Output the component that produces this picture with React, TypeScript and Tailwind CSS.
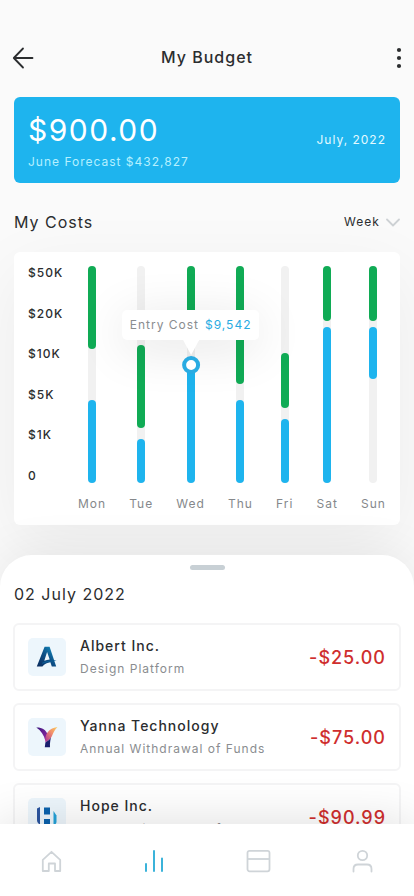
import React from "react";

type Segment = { from: number; to: number; color: "green" | "blue" };
type Day = { label: string; segments: Segment[]; entry?: { value: string; at: number } };

const PLOT_HEIGHT = 217;

const days: Day[] = [
  { label: "Mon", segments: [{ from: 0, to: 83, color: "green" }, { from: 134, to: 217, color: "blue" }] },
  { label: "Tue", segments: [{ from: 79, to: 162, color: "green" }, { from: 173, to: 217, color: "blue" }] },
  {
    label: "Wed",
    segments: [{ from: 0, to: 60, color: "green" }, { from: 95, to: 217, color: "blue" }],
    entry: { value: "$9,542", at: 99 },
  },
  { label: "Thu", segments: [{ from: 0, to: 118, color: "green" }, { from: 134, to: 217, color: "blue" }] },
  { label: "Fri", segments: [{ from: 87, to: 142, color: "green" }, { from: 153, to: 217, color: "blue" }] },
  { label: "Sat", segments: [{ from: 0, to: 55, color: "green" }, { from: 61, to: 217, color: "blue" }] },
  { label: "Sun", segments: [{ from: 0, to: 55, color: "green" }, { from: 61, to: 113, color: "blue" }] },
];

const scale = ["$50K", "$20K", "$10K", "$5K", "$1K", "0"];

function AlbertLogo() {
  return (
    <svg width="22" height="22" viewBox="0 0 22 22" aria-hidden="true">
      <defs>
        <linearGradient id="albert" x1="0" y1="1" x2="1" y2="0">
          <stop offset="0" stopColor="#0b2a5c" />
          <stop offset="0.5" stopColor="#0c4f86" />
          <stop offset="1" stopColor="#1596c8" />
        </linearGradient>
      </defs>
      <path
        d="M8.600 .8h5L20.200 20.500h-4.400l-1.400-4.300c-3 .3-5.800 1.500-8 4.300H.8Zm2.500 5.200L8.300 14.800c1.700-.8 3.500-1.200 5.400-1.300Z"
        fill="url(#albert)"
      />
      <path d="M6.500 16.500c4-2.200 8.500-1.800 14-2.500-4 2.300-9.500 1.700-14.500 4Z" fill="#0d5a93" />
    </svg>
  );
}

function YannaLogo() {
  return (
    <svg width="22" height="22" viewBox="0 0 22 22" aria-hidden="true">
      <defs>
        <linearGradient id="yannaLeft" x1="0" y1="0" x2="1" y2="1">
          <stop offset="0" stopColor="#3a1680" />
          <stop offset="1" stopColor="#9a2aa5" />
        </linearGradient>
        <linearGradient id="yannaRight" x1="1" y1="0" x2="0" y2="1">
          <stop offset="0" stopColor="#fdd05a" />
          <stop offset="0.45" stopColor="#f08a6c" />
          <stop offset="1" stopColor="#a62d9a" />
        </linearGradient>
      </defs>
      <path d="M.3 1.500c5-.3 9.700 2 11.700 7.500l-2.600 6C8 9 5 4.500.3 1.500Z" fill="url(#yannaLeft)" />
      <path d="M21.500 1c-2.800 2.500-4 5.500-5.500 9-1.400 3-3.500 4.600-6.600 6.500C8.500 8.500 12.500 2 21.500 1Z" fill="url(#yannaRight)" />
      <path d="M9.400 16.500c2.500-1.500 4.300-3 5.600-5-.8 3.200-1.200 6-1 9.700H8.800Z" fill="#1a1e6e" />
    </svg>
  );
}

function HopeLogo() {
  return (
    <svg width="22" height="22" viewBox="0 0 22 22" aria-hidden="true">
      <path d="M1 2.500 4 1v17.500c-2-1-3-2.500-3-4.500Z" fill="#2b55a0" />
      <path d="M8 1.500h6v7H8zM8 13h6v7H8z" fill="#0b62ad" />
      <path d="M17.500 5 20.500 9.500V16c0 1.500-1.200 2.500-3 3.500Z" fill="#25a2d8" />
    </svg>
  );
}

const payments = [
  { name: "Albert Inc.", note: "Design Platform", amount: "-$25.00", Logo: AlbertLogo },
  { name: "Yanna Technology", note: "Annual Withdrawal of Funds", amount: "-$75.00", Logo: YannaLogo },
  { name: "Hope Inc.", note: "Annual Withdrawal of Funds", amount: "-$90.99", Logo: HopeLogo },
];

function DayColumn({ day }: { day: Day }) {
  return (
    <li className="flex flex-col items-center gap-[13px]">
      <div className="relative w-2 rounded-full bg-[#f1f1f1]" style={{ height: PLOT_HEIGHT }}>
        {day.segments.map((s) => (
          <span
            key={s.from}
            className={
              s.color === "green"
                ? "absolute inset-x-0 rounded-full bg-[#10ab55]"
                : "absolute inset-x-0 rounded-full bg-[#1eb4ee]"
            }
            style={{ top: s.from, height: s.to - s.from }}
          />
        ))}
        {day.entry && (
          <div
            className="absolute left-1/2 z-10 flex -translate-x-1/2 -translate-y-[55px] flex-col items-center"
            style={{ top: day.entry.at }}
          >
            <p className="flex h-[30px] items-center gap-1.5 rounded-[5px] bg-white px-2 text-xs whitespace-nowrap text-[#8a8d90] shadow-[0_8px_50px_rgba(0,0,0,0.12)]">
              Entry Cost <span className="text-[#29abe2]">{day.entry.value}</span>
            </p>
            <svg width="16" height="16" viewBox="0 0 16 16" className="text-white" aria-hidden="true">
              <path d="M0 0h16L8 15Z" fill="currentColor" />
            </svg>
            <span className="size-[18px] rounded-full border-4 border-[#29abe2] bg-white" />
          </div>
        )}
      </div>
      <span className="text-xs leading-4 text-[#85888b]">{day.label}</span>
    </li>
  );
}

export default function App() {
  return (
    <div className="flex h-screen flex-col overflow-hidden bg-[#fafafa] font-['Inter',sans-serif] tracking-[1px] text-[#2b2d2f]">
      <main className="flex min-h-0 flex-1 flex-col overflow-hidden pt-[45px]">
        <header className="flex items-center justify-between px-3">
          <button type="button" aria-label="Back">
            <svg width="22" height="24" viewBox="0 0 22 24" fill="none" stroke="currentColor" strokeWidth="1.8" strokeLinecap="round" strokeLinejoin="round">
              <path d="M20.500 13H2M11 3.500 1.800 13l9.200 9.500" />
            </svg>
          </button>
          <h1 className="text-base font-medium">My Budget</h1>
          <button type="button" aria-label="More options" className="flex w-[22px] justify-end">
            <svg width="6" height="24" viewBox="0 0 6 24" fill="currentColor">
              <circle cx="3" cy="5" r="2.100" />
              <circle cx="3" cy="13" r="2.100" />
              <circle cx="3" cy="21" r="2.100" />
            </svg>
          </button>
        </header>

        <section className="mx-[14px] mt-7 flex h-[86px] shrink-0 items-center justify-between rounded-md bg-[#1eb4ee] px-[14px] text-white">
          <div className="pt-px">
            <p className="text-3xl leading-9 tracking-wider">$900.00</p>
            <p className="mt-[6px] text-xs leading-4 text-[#b5f0ff]">June Forecast $432,827</p>
          </div>
          <p className="text-xs text-[#e3faff]">July, 2022</p>
        </section>

        <section className="px-[14px] pt-[27px]">
          <div className="flex h-6 items-center justify-between">
            <h2 className="text-base">My Costs</h2>
            <div className="relative flex items-center">
              <select
                aria-label="Period"
                defaultValue="Week"
                className="w-14 appearance-none bg-transparent text-xs tracking-[1px] outline-none"
              >
                <option>Week</option>
                <option>Month</option>
              </select>
              <svg width="14" height="9" viewBox="0 0 14 9" fill="none" stroke="#cdd1d4" strokeWidth="1.8" strokeLinecap="round" strokeLinejoin="round" className="pointer-events-none absolute right-0" aria-hidden="true">
                <path d="m1 1.500 6 6 6-6" />
              </svg>
            </div>
          </div>

          <div className="mt-[18px] flex rounded-md bg-white px-[14px] pt-[14px] pb-[13px] shadow-[0_20px_70px_rgba(0,0,0,0.06)]">
            <ul className="flex h-[217px] w-[50px] shrink-0 flex-col justify-between text-xs leading-[14px] font-medium">
              {scale.map((s) => (
                <li key={s}>{s}</li>
              ))}
            </ul>
            <ul className="flex flex-1 justify-between">
              {days.map((d) => (
                <DayColumn key={d.label} day={d} />
              ))}
            </ul>
          </div>
        </section>

        <section className="relative z-20 mt-[30px] rounded-t-[32px] bg-white px-[13px] pt-[10px] shadow-[0_0_50px_rgba(0,0,0,0.08)]">
          <button type="button" aria-label="Expand list" className="mx-auto block h-[5px] w-[35px] rounded-full bg-[#c8d0d5]" />
          <h2 className="mt-3 px-px text-base leading-6">02 July 2022</h2>
          <ul className="mt-[17px] flex flex-col gap-3">
            {payments.map(({ name, note, amount, Logo }) => (
              <li key={name} className="flex h-[68px] items-center rounded-md border-2 border-[#f4f4f5] px-[13px]">
                <span className="flex size-[38px] items-center justify-center rounded-[5px] bg-[#edf6fc]">
                  <Logo />
                </span>
                <div className="ml-[14px] flex-1">
                  <h3 className="text-sm leading-5 font-medium">{name}</h3>
                  <p className="mt-[3px] text-xs leading-5 text-[#8a8d90]">{note}</p>
                </div>
                <p className="pt-px text-lg font-medium text-[#cf2e2e]">{amount}</p>
              </li>
            ))}
          </ul>
        </section>
      </main>

      <nav className="relative z-30 grid h-[72px] shrink-0 grid-cols-4 items-center justify-items-center bg-white pt-[2px] text-[#cfd4d8] shadow-[0_0_50px_rgba(0,0,0,0.14)]">
        <a href="#home" aria-label="Home">
          <svg width="24" height="24" viewBox="0 0 24 24" fill="none" stroke="currentColor" strokeWidth="1.8" strokeLinejoin="round">
            <path d="M2.800 10.800 11.500 2.800l8.700 8V22H15v-7.500H8.800V22h-6Z" />
          </svg>
        </a>
        <a href="#budget" aria-label="Budget" className="text-[#3bb3da]">
          <svg width="24" height="24" viewBox="0 0 24 24" fill="none" stroke="currentColor" strokeWidth="2" strokeLinecap="round">
            <path d="M3 15v7M11 2v20M19 9.500V22" />
          </svg>
        </a>
        <a href="#cards" aria-label="Cards">
          <svg width="26" height="24" viewBox="0 0 26 24" fill="none" stroke="currentColor" strokeWidth="1.8">
            <rect x="1.500" y="1.800" width="22" height="20.500" rx="2" />
            <path d="M1.500 10H23.500" />
          </svg>
        </a>
        <a href="#profile" aria-label="Profile">
          <svg width="24" height="24" viewBox="0 0 24 24" fill="none" stroke="currentColor" strokeWidth="1.8" strokeLinecap="round">
            <circle cx="12.500" cy="6.500" r="4.700" />
            <path d="M3.500 22.500V20c0-3 1.500-4.500 4.500-4.500h9c3 0 4.500 1.500 4.500 4.500v2.500" />
          </svg>
        </a>
      </nav>
    </div>
  );
}
